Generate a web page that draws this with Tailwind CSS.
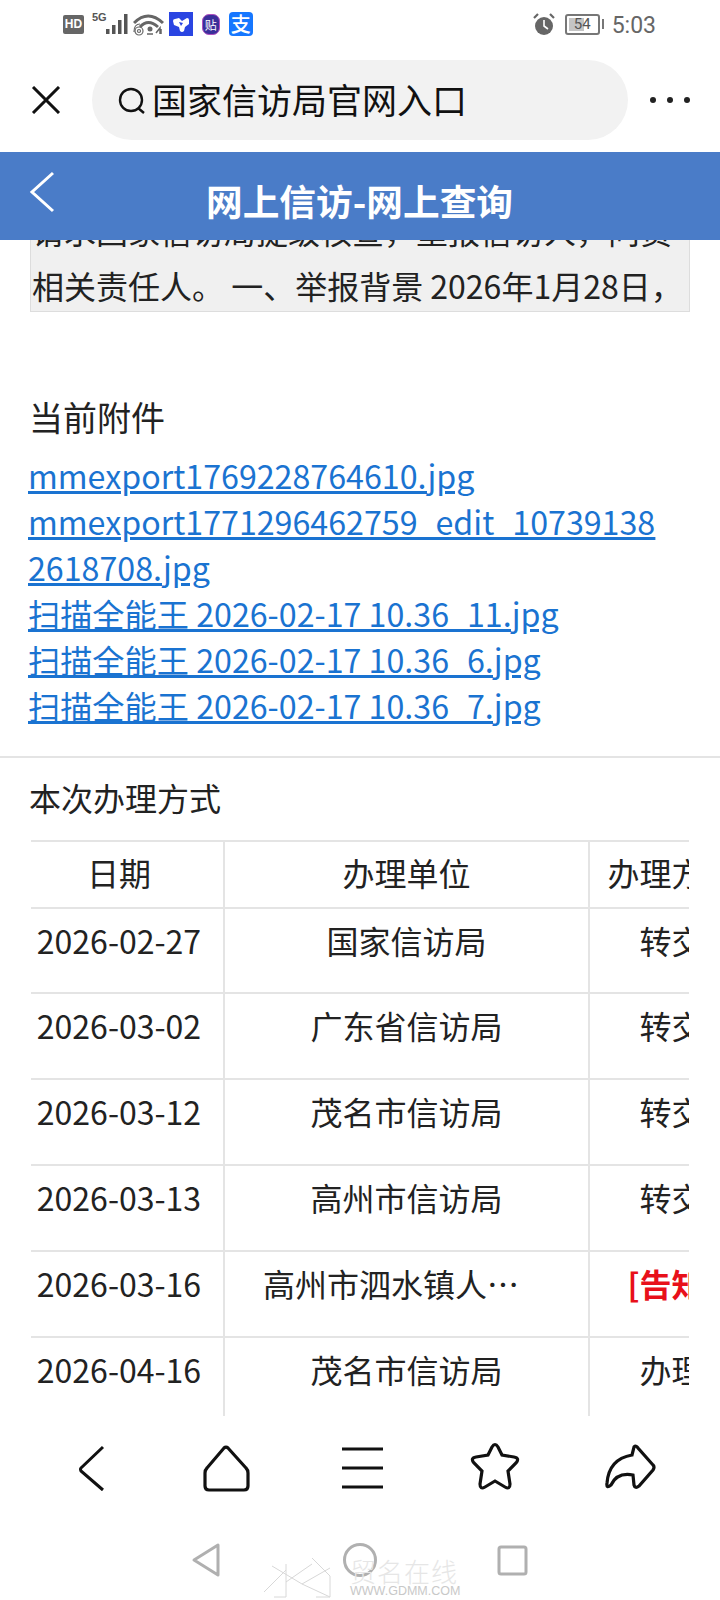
<!doctype html>
<html lang="zh-CN">

<head>
    <meta charset="UTF-8">
    <meta name="viewport" content="width=device-width, initial-scale=1.0">
    <script src="https://cdn.jsdelivr.net/npm/@tailwindcss/browser@4"></script>
</head>

<body class="w-[720px] h-[1600px] overflow-hidden bg-white font-['Noto_Sans_CJK_SC','Noto_Sans',sans-serif] text-[#222]">
    <div class="relative flex flex-col h-[1600px] w-[720px] overflow-hidden">

        <!-- Status bar -->
        <div class="h-[60px] shrink-0 flex items-start pt-[12px] pl-[63px]">
            <div class="mt-[3px] w-[21px] h-[19px] rounded-[2px] bg-[#666] text-white text-[12px] font-bold leading-[19px] text-center font-['Liberation_Sans',sans-serif]">HD</div>
            <div class="ml-[8px] -mt-[1px] text-[11px] font-bold leading-[13px] text-[#555] font-['Liberation_Sans',sans-serif]">5G</div>
            <svg class="-ml-[2px] mt-[2px]" width="24" height="22" viewBox="0 0 24 22" fill="#555">
                <rect x="1" y="15" width="3.5" height="5" /><rect x="7" y="11" width="3.5" height="9" /><rect x="13" y="6" width="3.5" height="14" /><rect x="19" y="0" width="3.5" height="20" />
            </svg>
            <svg class="ml-[4px]" width="32" height="24" viewBox="0 0 32 24" fill="none" stroke="#666">
                <path d="M1 11 Q15 -3 30 11" stroke-width="3" />
                <path d="M7 15 Q15 6 25 15" stroke-width="3" />
                <circle cx="6" cy="19" r="1.5" stroke-width="1.2" />
                <circle cx="6" cy="19" r="4" stroke-width="1.2" />
                <path d="M1 20 Q1 12 7 12" stroke-width="1.2" />
                <circle cx="17" cy="17" r="2.5" fill="#666" stroke="none" />
                <path d="M14 22 H20 M23 21 l4 -5 v6 M28 22 v-5" stroke-width="1.5" />
            </svg>
            <svg class="ml-[4px]" width="24" height="24" viewBox="0 0 24 24">
                <rect width="24" height="24" fill="#2a45e2" />
                <path d="M4 9 Q4 7 6 7 L10 6 L13 9 L18 6 Q20 6 20 8 L20 12 L16 15 L15 19 Q13 21 11 19 L10 15 L5 13 Z" fill="#fff" />
                <path d="M10 10 L14 11 L12 14 Z" fill="#2a45e2" />
            </svg>
            <div class="ml-[9px] mt-[2px] w-[18px] h-[21px] rounded-[7px] border border-[#b04fc0] bg-[#3a2f9a] text-white text-[12px] leading-[19px] text-center">贴</div>
            <div class="ml-[9px] w-[24px] h-[24px] rounded-[4px] bg-[#1677ff] text-white text-[20px] font-medium leading-[24px] text-center">支</div>
            <svg class="ml-[280px] mt-[1px]" width="22" height="23" viewBox="0 0 22 23">
                <circle cx="11" cy="13" r="9" fill="#666" />
                <path d="M11 7 V13 L15 16" stroke="#fff" stroke-width="1.6" fill="none" />
                <path d="M1 5 L5 1 M21 5 L17 1" stroke="#666" stroke-width="2.2" />
            </svg>
            <div class="relative ml-[10px] mt-[2px] w-[35px] h-[21px] rounded-[3px] border-2 border-[#777] overflow-hidden">
                <div class="absolute left-[2px] top-[2px] w-[15px] h-[13px] bg-[#c4c4c4]"></div>
                <div class="relative text-center text-[15px] leading-[17px] text-[#555] font-['Roboto',sans-serif]">54</div>
            </div>
            <div class="ml-[2px] mt-[7px] w-[2px] h-[10px] bg-[#777]"></div>
            <div class="ml-[8px] text-[23px] leading-[24px] mt-[2px] text-[#666] font-['Roboto',sans-serif]">5:03</div>
        </div>

        <!-- Search toolbar -->
        <div class="h-[92px] shrink-0 flex items-start">
            <svg class="ml-[31px] mt-[26px]" width="30" height="28" viewBox="0 0 30 28" fill="none" stroke="#111" stroke-width="3">
                <path d="M2 1 L28 27 M28 1 L2 27" />
            </svg>
            <div class="ml-[31px] w-[536px] h-[80px] rounded-[40px] bg-[#f2f2f2] flex items-center pl-[26px]">
                <svg width="28" height="27" viewBox="0 0 28 27" fill="none" stroke="#111" stroke-width="2.4">
                    <circle cx="13" cy="13" r="11" />
                    <path d="M20 21 L26 26" />
                </svg>
                <span class="ml-[6px] text-[35px] leading-[46px] -mt-[2px] text-[#111]">国家信访局官网入口</span>
            </div>
            <div class="ml-[22px] mt-[37px] flex gap-[11px]">
                <div class="size-[6px] rounded-full bg-[#222]"></div>
                <div class="size-[6px] rounded-full bg-[#222]"></div>
                <div class="size-[6px] rounded-full bg-[#222]"></div>
            </div>
        </div>

        <!-- Page header -->
        <div class="relative z-10 h-[88px] shrink-0 bg-[#4a7cc8] flex justify-center text-white">
            <svg class="absolute left-[29px] top-[19px]" width="26" height="42" viewBox="0 0 26 42" fill="none" stroke="#fff" stroke-width="3">
                <path d="M24 2 L3 21 L24 40" />
            </svg>
            <div class="mt-[23px] -ml-[1px] text-[36.7px] leading-[50px] font-bold">网上信访-网上查询</div>
        </div>

        <!-- Content -->
        <div class="flex-1 min-h-0 overflow-hidden">
            <div class="-mt-[38px] mx-[30px] h-[110px] bg-[#f0f0f0] border border-[#ddd] overflow-hidden px-[1px] text-[32px] leading-[55px] whitespace-nowrap">
                <p>请求国家信访局提级核查，重报信访人，问责</p>
                <p>相关责任人。 一、举报背景 2026年1月28日，</p>
            </div>

            <div class="mt-[82px] ml-[29px] text-[34px] leading-[46px]">当前附件</div>

            <div class="mt-[12px] ml-[28px] w-[638px] text-[32.2px] leading-[46px] text-[#1a73d1] underline break-all">
                <a class="block" href="#">mmexport1769228764610.jpg</a>
                <a class="block" href="#">mmexport1771296462759_edit_107391382618708.jpg</a>
                <a class="block" href="#">扫描全能王 2026-02-17 10.36_11.jpg</a>
                <a class="block" href="#">扫描全能王 2026-02-17 10.36_6.jpg</a>
                <a class="block" href="#">扫描全能王 2026-02-17 10.36_7.jpg</a>
            </div>

            <div class="mt-[28px] h-[2px] bg-[#e4e4e4]"></div>

            <div class="mt-[16px] ml-[29px] text-[32px] leading-[46px]">本次办理方式</div>

            <div class="mt-[20px] ml-[31px] w-[658px] overflow-hidden">
                <table class="w-[722px] table-fixed border-collapse text-[32px] text-center">
                    <colgroup>
                        <col class="w-[193px]">
                        <col class="w-[365px]">
                        <col class="w-[164px]">
                    </colgroup>
                    <thead>
                        <tr class="h-[67px] border-y-2 border-[#e4e4e4]">
                            <th class="font-normal pr-[16px] pb-[6px]">日期</th>
                            <th class="font-normal pb-[6px] border-l-2 border-[#e4e4e4]">办理单位</th>
                            <th class="font-normal pb-[6px] border-l-2 border-[#e4e4e4] whitespace-nowrap">办理方式</th>
                        </tr>
                    </thead>
                    <tbody>
                        <tr class="h-[85px] border-b-2 border-[#e4e4e4]">
                            <td class="align-top leading-[62px] pr-[16px]">2026-02-27</td>
                            <td class="align-top leading-[62px] border-l-2 border-[#e4e4e4]">国家信访局</td>
                            <td class="align-top leading-[62px] border-l-2 border-[#e4e4e4]">转交</td>
                        </tr>
                        <tr class="h-[86px] border-b-2 border-[#e4e4e4]">
                            <td class="align-top leading-[62px] pr-[16px]">2026-03-02</td>
                            <td class="align-top leading-[62px] border-l-2 border-[#e4e4e4]">广东省信访局</td>
                            <td class="align-top leading-[62px] border-l-2 border-[#e4e4e4]">转交</td>
                        </tr>
                        <tr class="h-[86px] border-b-2 border-[#e4e4e4]">
                            <td class="align-top leading-[62px] pr-[16px]">2026-03-12</td>
                            <td class="align-top leading-[62px] border-l-2 border-[#e4e4e4]">茂名市信访局</td>
                            <td class="align-top leading-[62px] border-l-2 border-[#e4e4e4]">转交</td>
                        </tr>
                        <tr class="h-[86px] border-b-2 border-[#e4e4e4]">
                            <td class="align-top leading-[62px] pr-[16px]">2026-03-13</td>
                            <td class="align-top leading-[62px] border-l-2 border-[#e4e4e4]">高州市信访局</td>
                            <td class="align-top leading-[62px] border-l-2 border-[#e4e4e4]">转交</td>
                        </tr>
                        <tr class="h-[86px] border-b-2 border-[#e4e4e4]">
                            <td class="align-top leading-[62px] pr-[16px]">2026-03-16</td>
                            <td class="align-top leading-[62px] pr-[31px] border-l-2 border-[#e4e4e4]">高州市泗水镇人…</td>
                            <td class="align-top leading-[62px] border-l-2 border-[#e4e4e4] font-bold text-[#e8101a]">[告知]</td>
                        </tr>
                        <tr class="h-[86px]">
                            <td class="align-top leading-[62px] pr-[16px]">2026-04-16</td>
                            <td class="align-top leading-[62px] border-l-2 border-[#e4e4e4]">茂名市信访局</td>
                            <td class="align-top leading-[62px] border-l-2 border-[#e4e4e4]">办理</td>
                        </tr>
                    </tbody>
                </table>
            </div>
        </div>

        <!-- Bottom toolbar -->
        <div class="h-[104px] shrink-0 flex items-start bg-white text-black">
            <svg class="ml-[76px] mt-[28px]" width="30" height="48" viewBox="0 0 30 48" fill="none" stroke="#111" stroke-width="3">
                <path d="M27 3 L5 24 Q4 25 5 27 L27 46" />
            </svg>
            <svg class="ml-[94px] mt-[28px]" width="52" height="48" viewBox="0 0 52 48" fill="none" stroke="#111" stroke-width="3.2">
                <path d="M24 4 Q26 2 28 4 L46 24 Q48 26 48 29 V42 Q48 46 44 46 H9 Q5 46 5 42 V29 Q5 26 7 24 Z" />
            </svg>
            <svg class="ml-[88px] mt-[31px]" width="44" height="42" viewBox="0 0 44 42" fill="none" stroke="#111" stroke-width="3.2">
                <path d="M2 2 H43 M2 21 H43 M2 40 H43" />
            </svg>
            <svg class="ml-[85px] mt-[24px]" width="52" height="52" viewBox="0 0 52 52" fill="none" stroke="#111" stroke-width="3.2">
                <path d="M23 7 Q26 2 29 7 L33 15 L45 17 Q51 18 47 23 L39 31 L41 44 Q41 50 36 47 L26 41 L16 47 Q11 50 11 44 L13 31 L5 23 Q1 18 7 17 L19 15 Z" />
            </svg>
            <svg class="ml-[79px] mt-[23px]" width="56" height="52" viewBox="0 0 56 52" fill="none" stroke="#111" stroke-width="3.2">
                <path d="M34 8 Q36 6 38 9 L53 26 Q55 28 53 31 L39 47 Q35 50 34 46 L33 36 Q17 33 11 46 Q6 50 7 44 Q9 20 32 16 Z" />
            </svg>
        </div>

        <!-- System navigation -->
        <div class="h-[80px] shrink-0 flex items-start">
            <svg class="ml-[190px] mt-[22px]" width="32" height="36" viewBox="0 0 32 36" fill="none" stroke="#b0b0b0" stroke-width="3">
                <path d="M28 3 V33 L4 18 Z" stroke-linejoin="round" />
            </svg>
            <svg class="ml-[120px] mt-[22px]" width="36" height="36" viewBox="0 0 36 36" fill="none" stroke="#b0b0b0" stroke-width="3">
                <circle cx="18" cy="18" r="15.5" />
            </svg>
            <svg class="ml-[118px] mt-[24px]" width="32" height="32" viewBox="0 0 32 32" fill="none" stroke="#b0b0b0" stroke-width="3">
                <rect x="3" y="3" width="27" height="27" rx="2" />
            </svg>
        </div>

        <!-- Watermark -->
        <div class="absolute left-[264px] top-[1558px] w-[200px] h-[42px] flex text-[#dcdcdc]">
            <svg class="-mt-[2px]" width="76" height="42" viewBox="0 0 76 42" fill="none" stroke="#d8d8d8" stroke-width="1">
                <path d="M10 41 H22 V8 M22 14 L0 36 M8 10 L38 28 L66 12 M38 28 L66 41 M48 2 L66 20 V41 H52 M22 26 L48 8" />
            </svg>
            <div class="ml-[10px] flex flex-col">
                <div class="text-[26px] leading-[26px] font-light tracking-[1px] text-[#e6e6e6]">贸名在线</div>
                <div class="text-[12.5px] leading-[14px] text-[#c8c8c8] font-['Liberation_Sans',sans-serif]">WWW.GDMM.COM</div>
            </div>
        </div>
    </div>
</body>

</html>
